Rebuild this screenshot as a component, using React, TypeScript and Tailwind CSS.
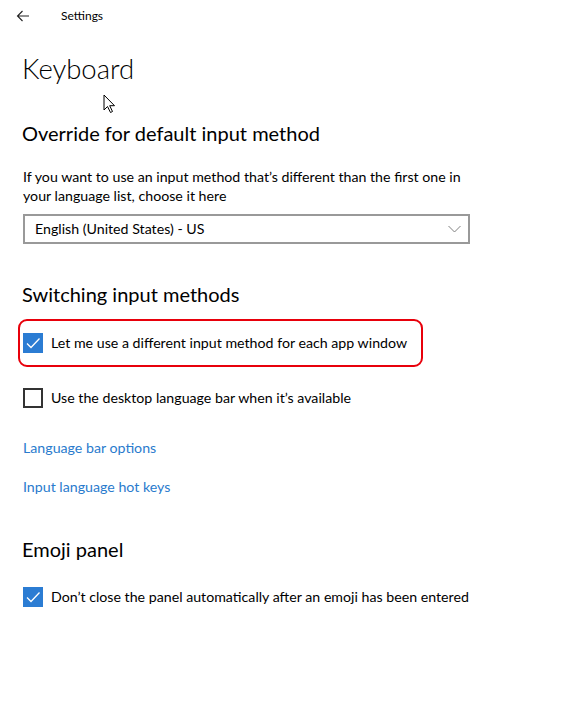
import React from "react";

const font = { fontFamily: '"Lato", "Segoe UI", sans-serif' };

function Check({ checked }: { checked: boolean }) {
  if (checked) {
    return (
      <div className="w-5 h-5 bg-[#2b7cd3] flex items-center justify-center shrink-0">
        <svg width="16" height="16" viewBox="0 0 16 16" fill="none">
          <path d="M2 8.5 L6 12.5 L14.5 3.5" stroke="white" strokeWidth="1.3" />
        </svg>
      </div>
    );
  }
  return <div className="w-5 h-5 border-2 border-[#333] bg-white shrink-0" />;
}

export default function App() {
  return (
    <div className="relative w-[581px] h-[704px] bg-white text-black" style={font}>
      {/* header */}
      <div className="h-8 flex items-center">
        <svg className="ml-[16px]" width="14" height="12" viewBox="0 0 14 12" fill="none">
          <path d="M13 6 H1.5 M6.5 1 L1.5 6 L6.5 11" stroke="#222" strokeWidth="1.1" />
        </svg>
        <span className="ml-[31px] text-[12px] leading-none">Settings</span>
      </div>

      <div className="pl-[22px]">
        <h1 className="mt-[17px] text-[27.5px] leading-[40px] font-light">Keyboard</h1>

        <h2 className="mt-[30px] text-[20px] leading-[28px]">Override for default input method</h2>

        <p className="mt-[20px] pl-px text-[14.2px] leading-[19px] w-[455px]">
          If you want to use an input method that’s different than the first one in your language list, choose it here
        </p>

        <div className="mt-[9px] ml-px w-[447px] h-[30px] border-2 border-[#999] flex items-center justify-between pl-[10px] pr-[7px]">
          <span className="text-[14.2px]">English (United States) - US</span>
          <svg width="13" height="8" viewBox="0 0 13 8" fill="none">
            <path d="M0.5 1 L6.5 7 L12.5 1" stroke="#808080" strokeWidth="1" />
          </svg>
        </div>

        <h2 className="mt-[36px] text-[20px] leading-[28px]">Switching input methods</h2>

        <div className="mt-[11px] -ml-[4px] w-[405px] h-[48px] border-2 border-[#e8000b] rounded-[9px] flex items-center pl-[3px]">
          <Check checked />
          <span className="ml-[8px] text-[14.2px]">Let me use a different input method for each app window</span>
        </div>

        <div className="mt-[20px] ml-px flex items-center">
          <Check checked={false} />
          <span className="ml-[8px] text-[14.2px]">Use the desktop language bar when it’s available</span>
        </div>

        <div className="mt-[30px] ml-px text-[14.2px] leading-[20px] text-[#2a7bcd]">Language bar options</div>
        <div className="mt-[19px] ml-px text-[14.2px] leading-[20px] text-[#2a7bcd]">Input language hot keys</div>

        <h2 className="mt-[38px] text-[20px] leading-[28px]">Emoji panel</h2>

        <div className="mt-[23px] ml-px flex items-center">
          <Check checked />
          <span className="ml-[8px] text-[14.2px]">Don’t close the panel automatically after an emoji has been entered</span>
        </div>
      </div>

      {/* mouse cursor */}
      <svg className="absolute left-[103px] top-[94px]" width="14" height="20" viewBox="0 0 14 20" fill="none">
        <path d="M1 1 V16 L4.5 12.5 L7.5 18.5 L9.5 17.5 L6.7 11.7 H11.5 Z" fill="white" stroke="black" strokeWidth="1" strokeLinejoin="miter" />
      </svg>
    </div>
  );
}
